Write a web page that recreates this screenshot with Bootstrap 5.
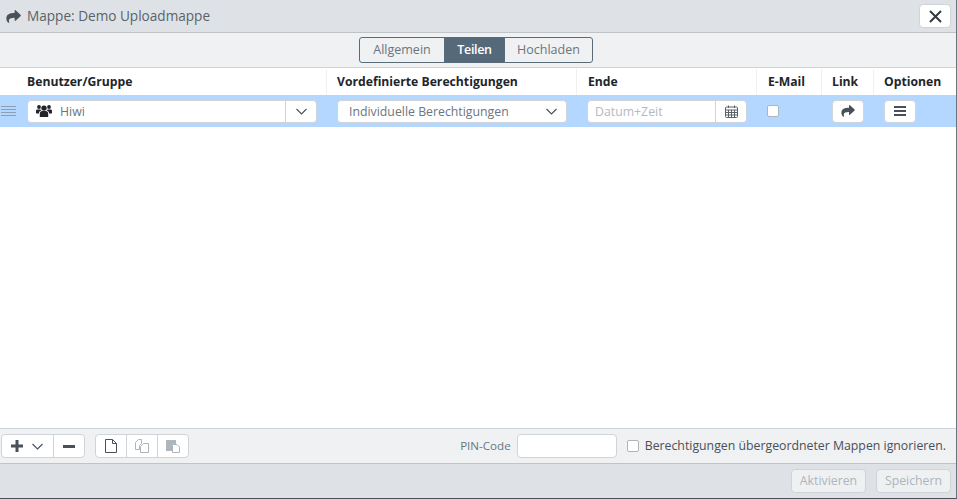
<!DOCTYPE html>
<html lang="de">
<head>
    <meta charset="UTF-8">
    <title>Mappe: Demo Uploadmappe</title>
    <link href="https://cdn.jsdelivr.net/npm/bootstrap@5.3.2/dist/css/bootstrap.min.css" rel="stylesheet">
    <style>
        html, body { height: 100%; overflow: hidden; }
        body {
            font-family: "Open Sans", "Noto Sans", sans-serif;
            font-size: 12.3px;
            color: #212529;
            background: #fff;
        }
        .dlg {
            height: 499px;
            border-right: 1px solid #6c757d;
            border-bottom: 1px solid #495057;
        }
        .dlg-title {
            height: 33px;
            background: #dee2e6;
            border-bottom: 1px solid #bfc4c8;
            padding: 0 5px 0 6px;
            color: #5a6268;
            font-size: 13.6px;
            font-weight: 500;
        }
        .title-ic { margin-right: 6px; }
        .dlg-close {
            width: 32px;
            height: 24px;
            background: #fff;
            border: 1px solid #ced4da;
            border-radius: 4px;
            padding: 0;
        }
        .dlg-tabs {
            height: 35px;
            padding-right: 4px;
            background: #eff1f3;
            border-bottom: 1px solid #ced4da;
        }
        .tab-btn {
            height: 26px;
            padding: 0;
            font-size: 12.5px;
            color: #6c757d;
            background: #eff1f3;
            border: 1px solid #5a6b78;
        }
        .tab-btn + .tab-btn { margin-left: -1px; }
        .tab-a { width: 86px; border-radius: 3px 0 0 3px; }
        .tab-b { width: 61px; }
        .tab-c { width: 89px; border-radius: 0 3px 3px 0; }
        .tab-btn.on { background: #56697a; color: #fff; font-weight: 600; letter-spacing: -.35px; }
        .head-row {
            height: 27px;
            padding-top: 1px;
            font-weight: 700;
            font-size: 12.2px;
            color: #212529;
        }
        .perm-row { height: 32px; background: #b3d7ff; }
        .c-grip { width: 17px; }
        .c-user { width: 310px; padding-left: 10px; padding-right: 10px; }
        .c-perm { width: 250px; padding-left: 10px; padding-right: 10px; }
        .c-end { width: 180px; padding-left: 10px; padding-right: 10px; }
        .c-mail { width: 65px; padding-left: 10px; }
        .c-link { width: 52px; padding-left: 10px; }
        .c-opt { padding-left: 10px; }
        .head-row > div { height: 100%; display: flex; align-items: center; border-right: 1px solid #eef0f2; }
        .head-row > div:last-child, .head-row > .c-grip { border-right: 0; }
        .head-row > .c-end { padding-left: 11px; }
        .head-row > .c-mail { padding-left: 11px; }
        .fld {
            height: 23px;
            background: #fff;
            border: 1px solid #ced4da;
            border-radius: 4px;
            color: #6c757d;
        }
        .fld-main { padding-left: 8px; gap: 8px; }
        .fld-side { border-left: 1px solid #ced4da; width: 31px; height: 100%; }
        .fld-txt { margin-top: 2px; }
        .sel-txt { margin-left: 3px; }
        .sel-chev { margin-right: 1px; }
        .fld-ph { color: #b4bac0; padding-left: 7px; }
        .sq-btn {
            width: 32px;
            height: 23px;
            padding: 0;
            background: #fff;
            border: 1px solid #ced4da;
            border-radius: 4px;
        }
        .chk {
            display: block;
            flex: none;
            width: 12px;
            height: 12px;
            background: #fff;
            border: 1px solid #adb5bd;
            border-radius: 2px;
        }
        .dlg-body { flex: 1 1 auto; }
        .dlg-tools {
            height: 36px;
            background: #eff1f3;
            border-top: 1px solid #ced4da;
            border-bottom: 1px solid #bfc4c8;
            padding: 0 10px 0 1px;
        }
        .tool-grp {
            height: 24px;
            background: #fff;
            border: 1px solid #ced4da;
            border-radius: 4px;
        }
        .tool-grp > div { height: 100%; }
        .tool-grp > div + div { border-left: 1px solid #ced4da; }
        .t-cell { width: 31px; }
        .t-first { width: 30px; }
        .t-add { width: 51px; gap: 9px; padding-right: 1px; }
        .grp-gap { margin-left: 10px; }
        .pin-lbl { color: #6c757d; font-size: 11.6px; margin-right: 6px; }
        .pin-inp {
            width: 100px;
            height: 24px;
            background: #fff;
            border: 1px solid #ced4da;
            border-radius: 4px;
            margin-right: 10px;
        }
        .ign-lbl { color: #495057; font-size: 12.3px; margin-left: 6px; }
        .dlg-foot {
            height: 34px;
            background: #dee2e6;
            padding: 0 5px;
        }
        .foot-btn {
            width: 75px;
            height: 24px;
            padding: 0;
            font-size: 12.3px;
            color: #adb5bd;
            background: #eef0f2;
            border: 1px solid #ced4da;
            border-radius: 4px;
        }
        .foot-gap { margin-left: 2px; }
    </style>
</head>
<body>
    <div class="dlg d-flex flex-column">
        <div class="dlg-title d-flex align-items-center flex-shrink-0">
            <svg width="15" height="13" viewBox="0 0 16 14" fill="#495057" class="title-ic"><path d="M15.700 5.300 10.300.2C9.900-.2 9.200.1 9.200.7v2.600C4.300 3.400.3 4.400.3 9.400c0 2 1.200 3.600 2.400 4.400.4.200.8-.1.7-.5C2.200 9.300 4.300 8.400 9.200 8.300V11c0 .6.700.9 1.100.5l5.400-5.100c.3-.3.3-.8 0-1.100z"/></svg>
            <span>Mappe: Demo Uploadmappe</span>
            <button type="button" class="dlg-close ms-auto d-flex align-items-center justify-content-center" aria-label="Schliessen">
                <svg width="13" height="13" viewBox="0 0 13 13" stroke="#343a40" stroke-width="2" fill="none"><path d="M1 1l11 11M12 1 1 12"/></svg>
            </button>
        </div>
        <div class="dlg-tabs d-flex align-items-center justify-content-center flex-shrink-0">
            <button type="button" class="tab-btn tab-a">Allgemein</button>
            <button type="button" class="tab-btn tab-b on">Teilen</button>
            <button type="button" class="tab-btn tab-c">Hochladen</button>
        </div>
        <div class="head-row d-flex flex-shrink-0">
            <div class="c-grip"></div>
            <div class="c-user">Benutzer/Gruppe</div>
            <div class="c-perm">Vordefinierte Berechtigungen</div>
            <div class="c-end">Ende</div>
            <div class="c-mail">E-Mail</div>
            <div class="c-link">Link</div>
            <div class="c-opt">Optionen</div>
        </div>
        <div class="perm-row d-flex align-items-center flex-shrink-0">
            <div class="c-grip d-flex justify-content-center">
                <svg width="15" height="10" viewBox="0 0 15 10" stroke="#8f9fb0" stroke-width="1" fill="none"><path d="M0 .5h15M0 3.500h15M0 6.500h15M0 9.500h15"/></svg>
            </div>
            <div class="c-user">
                <div class="fld d-flex align-items-center">
                    <div class="fld-main flex-grow-1 d-flex align-items-center">
                        <svg width="16" height="14" viewBox="0 0 16 13" fill="#212529"><circle cx="8" cy="3.600" r="2.700"/><circle cx="3" cy="2.500" r="1.900"/><circle cx="13" cy="2.500" r="1.900"/><path d="M3.800 12.500V9.200c0-1.800 1.200-2.700 2.200-2.700h4c1 0 2.200.9 2.200 2.700v3.300zM0 8.500V6.500C0 5.400.8 5 1.500 5h2.800c.3.500.6.800 1 1.100C3.800 6.500 3 7.500 3 8.900H.5zM16 8.500V6.500C16 5.400 15.200 5 14.500 5h-2.800c-.3.500-.6.800-1 1.100 1.500.4 2.300 1.400 2.300 2.800h2.500z"/></svg>
                        <span class="fld-txt">Hiwi</span>
                    </div>
                    <div class="fld-side d-flex align-items-center justify-content-center">
                        <svg width="11" height="7" viewBox="0 0 11 7" stroke="#495057" stroke-width="1.100" fill="none"><path d="M.5 1l5 5 5-5"/></svg>
                    </div>
                </div>
            </div>
            <div class="c-perm">
                <div class="fld d-flex align-items-center justify-content-between ps-2 pe-2">
                    <span class="fld-txt sel-txt">Individuelle Berechtigungen</span>
                    <svg width="11" height="7" viewBox="0 0 11 7" stroke="#495057" stroke-width="1.100" fill="none" class="sel-chev"><path d="M.5 1l5 5 5-5"/></svg>
                </div>
            </div>
            <div class="c-end">
                <div class="fld d-flex align-items-center">
                    <div class="fld-ph fld-txt flex-grow-1">Datum+Zeit</div>
                    <div class="fld-side d-flex align-items-center justify-content-center">
                        <svg width="13" height="13" viewBox="0 0 13 13" fill="none" stroke="#5a6268" stroke-width="1"><rect x=".5" y="2" width="12" height="10.500" rx="1"/><path d="M.5 5h12M.5 7.500h12M.5 10h12M3.500 5v7.500M6.500 5v7.500M9.500 5v7.500M3.500 .5V3M9.500 .5V3"/></svg>
                    </div>
                </div>
            </div>
            <div class="c-mail"><span class="chk"></span></div>
            <div class="c-link">
                <button type="button" class="sq-btn d-flex align-items-center justify-content-center" aria-label="Link">
                    <svg width="14" height="12" viewBox="0 0 16 14" fill="#495057"><path d="M15.700 5.300 10.300.2C9.900-.2 9.200.1 9.200.7v2.600C4.300 3.400.3 4.400.3 9.400c0 2 1.200 3.600 2.400 4.400.4.200.8-.1.7-.5C2.200 9.300 4.300 8.400 9.200 8.300V11c0 .6.700.9 1.100.5l5.400-5.100c.3-.3.3-.8 0-1.100z"/></svg>
                </button>
            </div>
            <div class="c-opt">
                <button type="button" class="sq-btn d-flex align-items-center justify-content-center" aria-label="Optionen">
                    <svg width="12" height="10" viewBox="0 0 12 10" stroke="#495057" stroke-width="1.800" fill="none"><path d="M0 1h12M0 5h12M0 9h12"/></svg>
                </button>
            </div>
        </div>
        <div class="dlg-body"></div>
        <div class="dlg-tools d-flex align-items-center flex-shrink-0">
            <div class="tool-grp d-flex">
                <div class="t-add d-flex align-items-center justify-content-center">
                    <svg width="12" height="12" viewBox="0 0 12 12" fill="#495057"><path d="M4.500 0h3v4.500H12v3H7.500V12h-3V7.500H0v-3h4.500z"/></svg>
                    <svg width="11" height="7" viewBox="0 0 11 7" stroke="#495057" stroke-width="1.100" fill="none"><path d="M.5 1l5 5 5-5"/></svg>
                </div>
                <div class="t-cell d-flex align-items-center justify-content-center">
                    <svg width="12" height="3" viewBox="0 0 12 3" fill="#495057"><path d="M0 0h12v3H0z"/></svg>
                </div>
            </div>
            <div class="tool-grp d-flex grp-gap">
                <div class="t-cell t-first d-flex align-items-center justify-content-center">
                    <svg width="12" height="14" viewBox="0 0 12 14" fill="none" stroke="#495057"><path d="M.5.5h7l4 4v9H.5zM7.500.5v4h4"/></svg>
                </div>
                <div class="t-cell d-flex align-items-center justify-content-center">
                    <svg width="14" height="14" viewBox="0 0 14 14" fill="none" stroke="#adb5bd"><path d="M.5 3.500l3-3h3v4l-2 2v4H.5zM5.500 7.500l3-3h5v9h-8z"/></svg>
                </div>
                <div class="t-cell d-flex align-items-center justify-content-center">
                    <svg width="14" height="14" viewBox="0 0 14 14"><path d="M0 1h10v4H6v7H0z" fill="#adb5bd"/><path d="M6.500 5.500h4.500l2.500 2.500v5.500h-7z" fill="#fff" stroke="#adb5bd"/></svg>
                </div>
            </div>
            <span class="pin-lbl ms-auto">PIN-Code</span>
            <div class="pin-inp"></div>
            <span class="chk"></span>
            <span class="ign-lbl">Berechtigungen übergeordneter Mappen ignorieren.</span>
        </div>
        <div class="dlg-foot d-flex align-items-center justify-content-end gap-2 flex-shrink-0">
            <button type="button" class="foot-btn">Aktivieren</button>
            <button type="button" class="foot-btn foot-gap">Speichern</button>
        </div>
    </div>
    <script src="https://cdn.jsdelivr.net/npm/bootstrap@5.3.2/dist/js/bootstrap.bundle.min.js"></script>
</body>
</html>
